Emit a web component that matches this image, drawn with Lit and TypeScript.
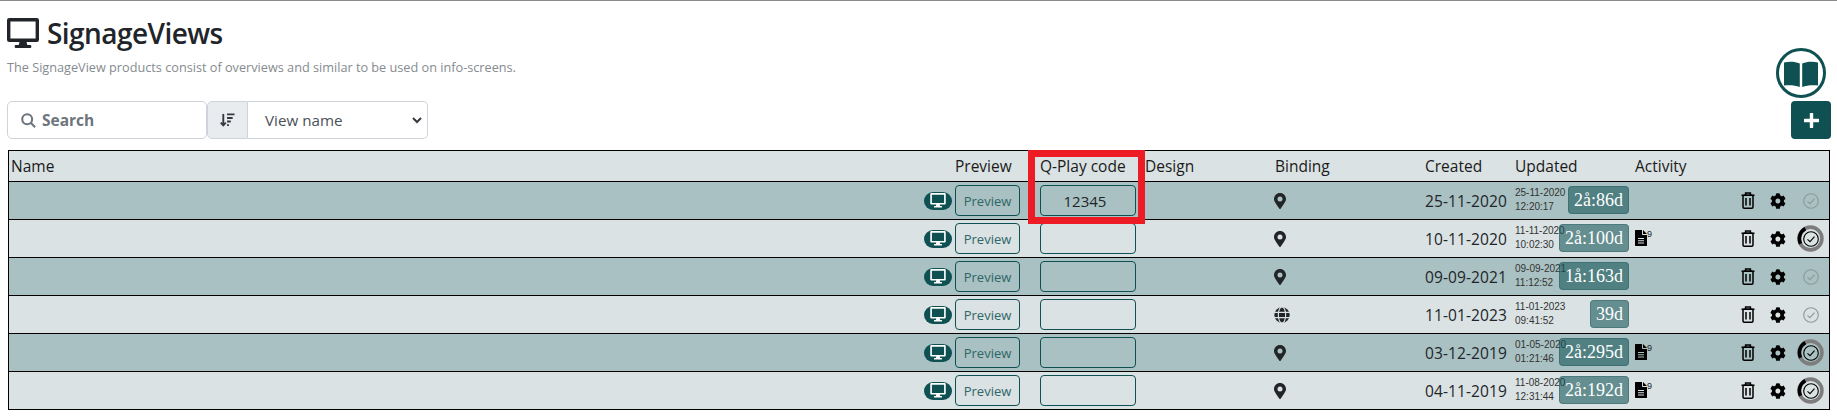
import { LitElement, html, css, svg } from "lit";
import { customElement } from "lit/decorators.js";

const monitor = (c: string) => svg`<path fill="${c}" fill-rule="evenodd" d="M2.200 0h27.600A2.200 2.200 0 0 1 32 2.200v19.600a2.200 2.200 0 0 1-2.200 2.200H19.500l.8 3h2.900a1.100 1.100 0 0 1 1.100 1.100v.8a1.100 1.100 0 0 1-1.100 1.100H8.800a1.100 1.100 0 0 1-1.100-1.100v-.8A1.100 1.100 0 0 1 8.800 27h2.900l.8-3H2.200A2.200 2.200 0 0 1 0 21.800V2.200A2.200 2.200 0 0 1 2.200 0zM3.400 3.400v17.200h25.200V3.400z"/>`;

const pin = html`<svg class="pin" viewBox="0 0 384 512"><path fill="#212529" d="M172 502C27 291 0 256 0 192 0 86 86 0 192 0s192 86 192 192c0 64-27 99-172 310-9 14-31 14-40 0zM192 272a80 80 0 1 0 0-160 80 80 0 0 0 0 160z"/></svg>`;
const globe = html`<svg class="globe" viewBox="0 0 24 24"><circle cx="12" cy="12" r="11.500" fill="#212529"/><g stroke="#dae2e3" stroke-width="1.700" fill="none"><path d="M0 8h24M0 16h24"/><ellipse cx="12" cy="12" rx="5.500" ry="12"/></g></svg>`;
const trash = html`<svg class="trash" viewBox="0 0 14 17"><g fill="none" stroke="#000" stroke-width="1.500"><path d="M.5 3.200h13M4.600 3V1.100h4.800V3"/><rect x="2" y="3.200" width="10" height="13" rx="1.200"/><path d="M5 6v7.500M9 6v7.500"/></g></svg>`;
const gear = html`<svg class="gear" viewBox="0 0 512 512"><path fill="#000" fill-rule="evenodd" d="M487 316l-43-25a195 195 0 0 0 0-70l43-25c5-3 7-9 5-14a252 252 0 0 0-55-96c-4-4-10-5-15-2l-43 25a192 192 0 0 0-61-35V24c0-6-4-11-9-12a255 255 0 0 0-110 0c-5 1-9 6-9 12v50a198 198 0 0 0-61 35L86 84c-5-3-11-2-15 2a250 250 0 0 0-55 96c-2 5 0 11 5 14l43 25a195 195 0 0 0 0 70l-43 25c-5 3-7 9-5 14a252 252 0 0 0 55 96c4 4 10 5 15 2l43-25a192 192 0 0 0 61 35v50c0 6 4 11 9 12a255 255 0 0 0 110 0c5-1 9-6 9-12v-50a198 198 0 0 0 61-35l43 25c5 3 11 2 15-2a250 250 0 0 0 55-96c2-5 0-11-5-14zM254 336a80 80 0 1 1 0-160 80 80 0 0 1 0 160z"/></svg>`;
const doc = html`<svg class="doc" viewBox="0 0 12 16"><path fill="#000" fill-rule="evenodd" d="M0 .6C0 .3.3 0 .6 0H7v4.200c0 .4.4.8.8.8H12v10.400c0 .3-.3.6-.6.6H.6a.6.6 0 0 1-.6-.6zM3 8v1h6V8zm0 2.300v1h6v-1zm0 2.300v1h6v-1zM8 0l4 4H8z"/></svg>`;

const rows = [
  { code: "12345", created: "25-11-2020", d: "25-11-2020", t: "12:20:17", age: "2å:86d", bind: "pin", act: false, on: false },
  { code: "", created: "10-11-2020", d: "11-11-2020", t: "10:02:30", age: "2å:100d", bind: "pin", act: true, on: true },
  { code: "", created: "09-09-2021", d: "09-09-2021", t: "11:12:52", age: "1å:163d", bind: "pin", act: false, on: false },
  { code: "", created: "11-01-2023", d: "11-01-2023", t: "09:41:52", age: "39d", bind: "globe", act: false, on: false },
  { code: "", created: "03-12-2019", d: "01-05-2020", t: "01:21:46", age: "2å:295d", bind: "pin", act: true, on: true },
  { code: "", created: "04-11-2019", d: "11-08-2020", t: "12:31:44", age: "2å:192d", bind: "pin", act: true, on: true },
];

@customElement("app-root")
export class AppRoot extends LitElement {
  static styles = css`
    :host { display: block; width: 1837px; height: 420px; box-sizing: border-box; border-top: 1px solid #8a8a8a; font-family: "Open Sans", "Noto Sans", sans-serif; color: #212529; background: #fff; overflow: hidden; position: relative; }
    * { box-sizing: border-box; }
    .page { padding: 17px 6px 0 7px; }
    .head { display: flex; align-items: center; gap: 8px; height: 30px; }
    .head svg { width: 32px; height: 31px; display: block; }
    h1 { margin: 0; font-size: 28px; font-weight: 600; line-height: 30px; color: #212529; letter-spacing: -.55px; }
    .sub { margin: 11px 0 0; font-size: 12.700px; line-height: 17px; color: #858b90; }
    .tools { display: flex; justify-content: space-between; align-items: flex-end; margin-top: 6px; height: 57px; }
    .filters { display: flex; height: 38px; align-items: stretch; }
    .search { width: 200px; border: 1px solid #ced4da; border-radius: 5px; display: flex; align-items: center; gap: 6px; padding-left: 13px; font-weight: 700; font-size: 15.500px; color: #6c757d; }
    .search svg { width: 15px; height: 15px; }
    .sort { width: 41px; background: #e9ecef; border: 1px solid #ced4da; border-radius: 5px 0 0 5px; display: flex; align-items: center; justify-content: center; }
    .sort svg { width: 15px; height: 16px; }
    .select { width: 180px; border: 1px solid #ced4da; border-left: 0; border-radius: 0 5px 5px 0; display: flex; align-items: center; justify-content: space-between; padding: 0 5px 0 17px; font-size: 15.200px; color: #495057; }
    .select svg { width: 10px; height: 7px; }
    .right { display: flex; flex-direction: column; align-items: flex-end; gap: 3px; }
    .book { width: 50px; height: 50px; border: 3px solid #0f5152; border-radius: 50%; margin-right: 5px; display: flex; align-items: center; justify-content: center; }
    .book svg { width: 34px; height: 27px; }
    .add { width: 40px; height: 38px; background: #0f5152; border-radius: 4px; display: flex; align-items: center; justify-content: center; }
    .add svg { width: 15px; height: 15px; }
    .table { margin: 11px 0 0 1px; border: 1px solid #000; border-bottom: 0; width: 1822px; position: relative; }
    .row { display: grid; grid-template-columns: 915px 29px 75px 117px 130px 150px 90px 120px 106px 29px 34px 1fr; align-items: center; border-bottom: 1px solid #000; height: 38px; background: #dae2e3; font-size: 15.500px; }
    .row.hd { height: 31px; color: #1a1a1a; }
    .row.dk { background: #a9c1c2; }
    .row.hd > span:first-child { padding-left: 2px; }
    .hpv { padding-left: 2px; }
    .hcode { padding-left: 12px; white-space: nowrap; }
    .pill { width: 28px; height: 18px; background: #0f5152; border-radius: 9px; display: flex; align-items: center; justify-content: center; }
    .pill svg { width: 16px; height: 15px; }
    .pv { width: 65px; height: 31px; margin-left: 2px; border: 1px solid #0f5152; border-radius: 4px; color: #2f6667; font-size: 13px; display: flex; align-items: center; justify-content: center; }
    .code { width: 96px; height: 31px; margin-left: 12px; border: 1px solid #0f5152; border-radius: 4px; display: flex; align-items: center; justify-content: center; font-size: 15px; padding: 1px 6px 0 0; }
    .bind { display: flex; }
    .pin { width: 12px; height: 16px; display: block; margin-left: -1px; }
    .globe { width: 16px; height: 16px; display: block; margin-left: -1px; }
    .created { font-size: 15.500px; letter-spacing: .1px; white-space: nowrap; }
    .upd { display: flex; align-items: center; position: relative; height: 100%; }
    .dt { font-family: "Liberation Sans", Arial, sans-serif; font-size: 10px; line-height: 14px; color: #333; white-space: nowrap; margin-top: -2px; }
    .age { position: absolute; right: 6px; top: 4px; height: 28px; padding: 0 5px; background: rgba(15, 81, 82, .58); border: 1px solid rgba(15, 81, 82, .3); border-radius: 4px; color: #fff; font-family: "Liberation Serif", serif; font-size: 18px; line-height: 26px; white-space: nowrap; }
    .act { display: flex; align-items: flex-start; height: 100%; padding-top: 10px; }
    .doc { width: 12px; height: 16px; display: block; }
    .act sup { font-family: "Liberation Sans", sans-serif; font-size: 9px; line-height: 8px; color: #222; }
    .trash { width: 14px; height: 17px; display: block; }
    .gear { width: 16px; height: 16px; display: block; }
    .chk { position: relative; width: 27px; height: 27px; display: flex; align-items: center; justify-content: center; margin-left: -7px; }
    .chk svg.tick { width: 16px; height: 16px; display: block; }
    .chk svg.ring { position: absolute; inset: 0; width: 27px; height: 27px; }
    .red { position: absolute; left: 1019px; top: -1px; width: 117px; height: 74px; border: 7px solid #ed1c24; pointer-events: none; }
  `;

  render() {
    return html`<div class="page">
      <div class="head"><svg viewBox="0 0 32 31">${monitor("#212529")}</svg><h1>SignageViews</h1></div>
      <p class="sub">The SignageView products consist of overviews and similar to be used on info-screens.</p>
      <div class="tools">
        <div class="filters">
          <div class="search"><svg viewBox="0 0 16 16"><g fill="none" stroke="#6c757d" stroke-width="2.200"><circle cx="6.600" cy="6.600" r="5.300"/><path d="M10.600 10.600l4.500 4.500"/></g></svg>Search</div>
          <div class="sort"><svg viewBox="0 0 16 16"><g fill="none" stroke="#343a40" stroke-width="2"><path d="M3.500 1.500v12"/><path d="M.8 10.800l2.700 3 2.700-3"/><path d="M7.500 2h8M7.500 5.800h6M7.500 9.600h4M7.500 13.400h2"/></g></svg></div>
          <div class="select">View name<svg viewBox="0 0 10 7"><path d="M1 1l4 4 4-4" fill="none" stroke="#343a40" stroke-width="2"/></svg></div>
        </div>
        <div class="right">
          <div class="book"><svg viewBox="0 0 34 27"><path fill="#0f5152" d="M0 2.500C5 1.500 11 1.500 15.800 3.500V27C11 25 5 24.800 0 25.500zM34 2.500C29 1.500 23 1.500 18.200 3.500V27C23 25 29 24.800 34 25.500z"/></svg></div>
          <div class="add"><svg viewBox="0 0 15 15"><path d="M7.500 1v13M1 7.500h13" stroke="#fff" stroke-width="3.400" stroke-linecap="round"/></svg></div>
        </div>
      </div>
      <div class="table">
        <div class="row hd"><span>Name</span><span></span><span class="hpv">Preview</span><span class="hcode">Q-Play code</span><span>Design</span><span>Binding</span><span>Created</span><span>Updated</span><span>Activity</span><span></span><span></span><span></span></div>
        ${rows.map((r, i) => html`<div class="row ${i % 2 === 0 ? "dk" : ""}">
          <span></span>
          <div class="pill"><svg viewBox="0 0 32 31">${monitor("#fff")}</svg></div>
          <div class="pv">Preview</div>
          <div class="code">${r.code}</div>
          <span></span>
          <div class="bind">${r.bind === "pin" ? pin : globe}</div>
          <span class="created">${r.created}</span>
          <div class="upd"><div class="dt">${r.d}<br />${r.t}</div><div class="age">${r.age}</div></div>
          <div class="act">${r.act ? html`${doc}<sup>9</sup>` : ""}</div>
          <div>${trash}</div>
          <div>${gear}</div>
          <div class="chk">
            ${r.on ? html`<svg class="ring" viewBox="0 0 26 26"><circle cx="13" cy="13" r="11" fill="none" stroke="#7d7d7d" stroke-width="3.500"/><path d="M8 3.500A11 11 0 0 0 3.500 18" fill="none" stroke="#000" stroke-width="3.500"/></svg>` : ""}
            <svg class="tick" viewBox="0 0 16 16"><g fill="none" stroke="${r.on ? "#000" : "#8a9a9b"}" stroke-width="1.100"><circle cx="8" cy="8" r="7.300"/><path d="M4.500 8.300l2.500 2.400 4.500-5"/></g></svg>
          </div>
        </div>`)}
        <div class="red"></div>
      </div>
    </div>`;
  }
}
